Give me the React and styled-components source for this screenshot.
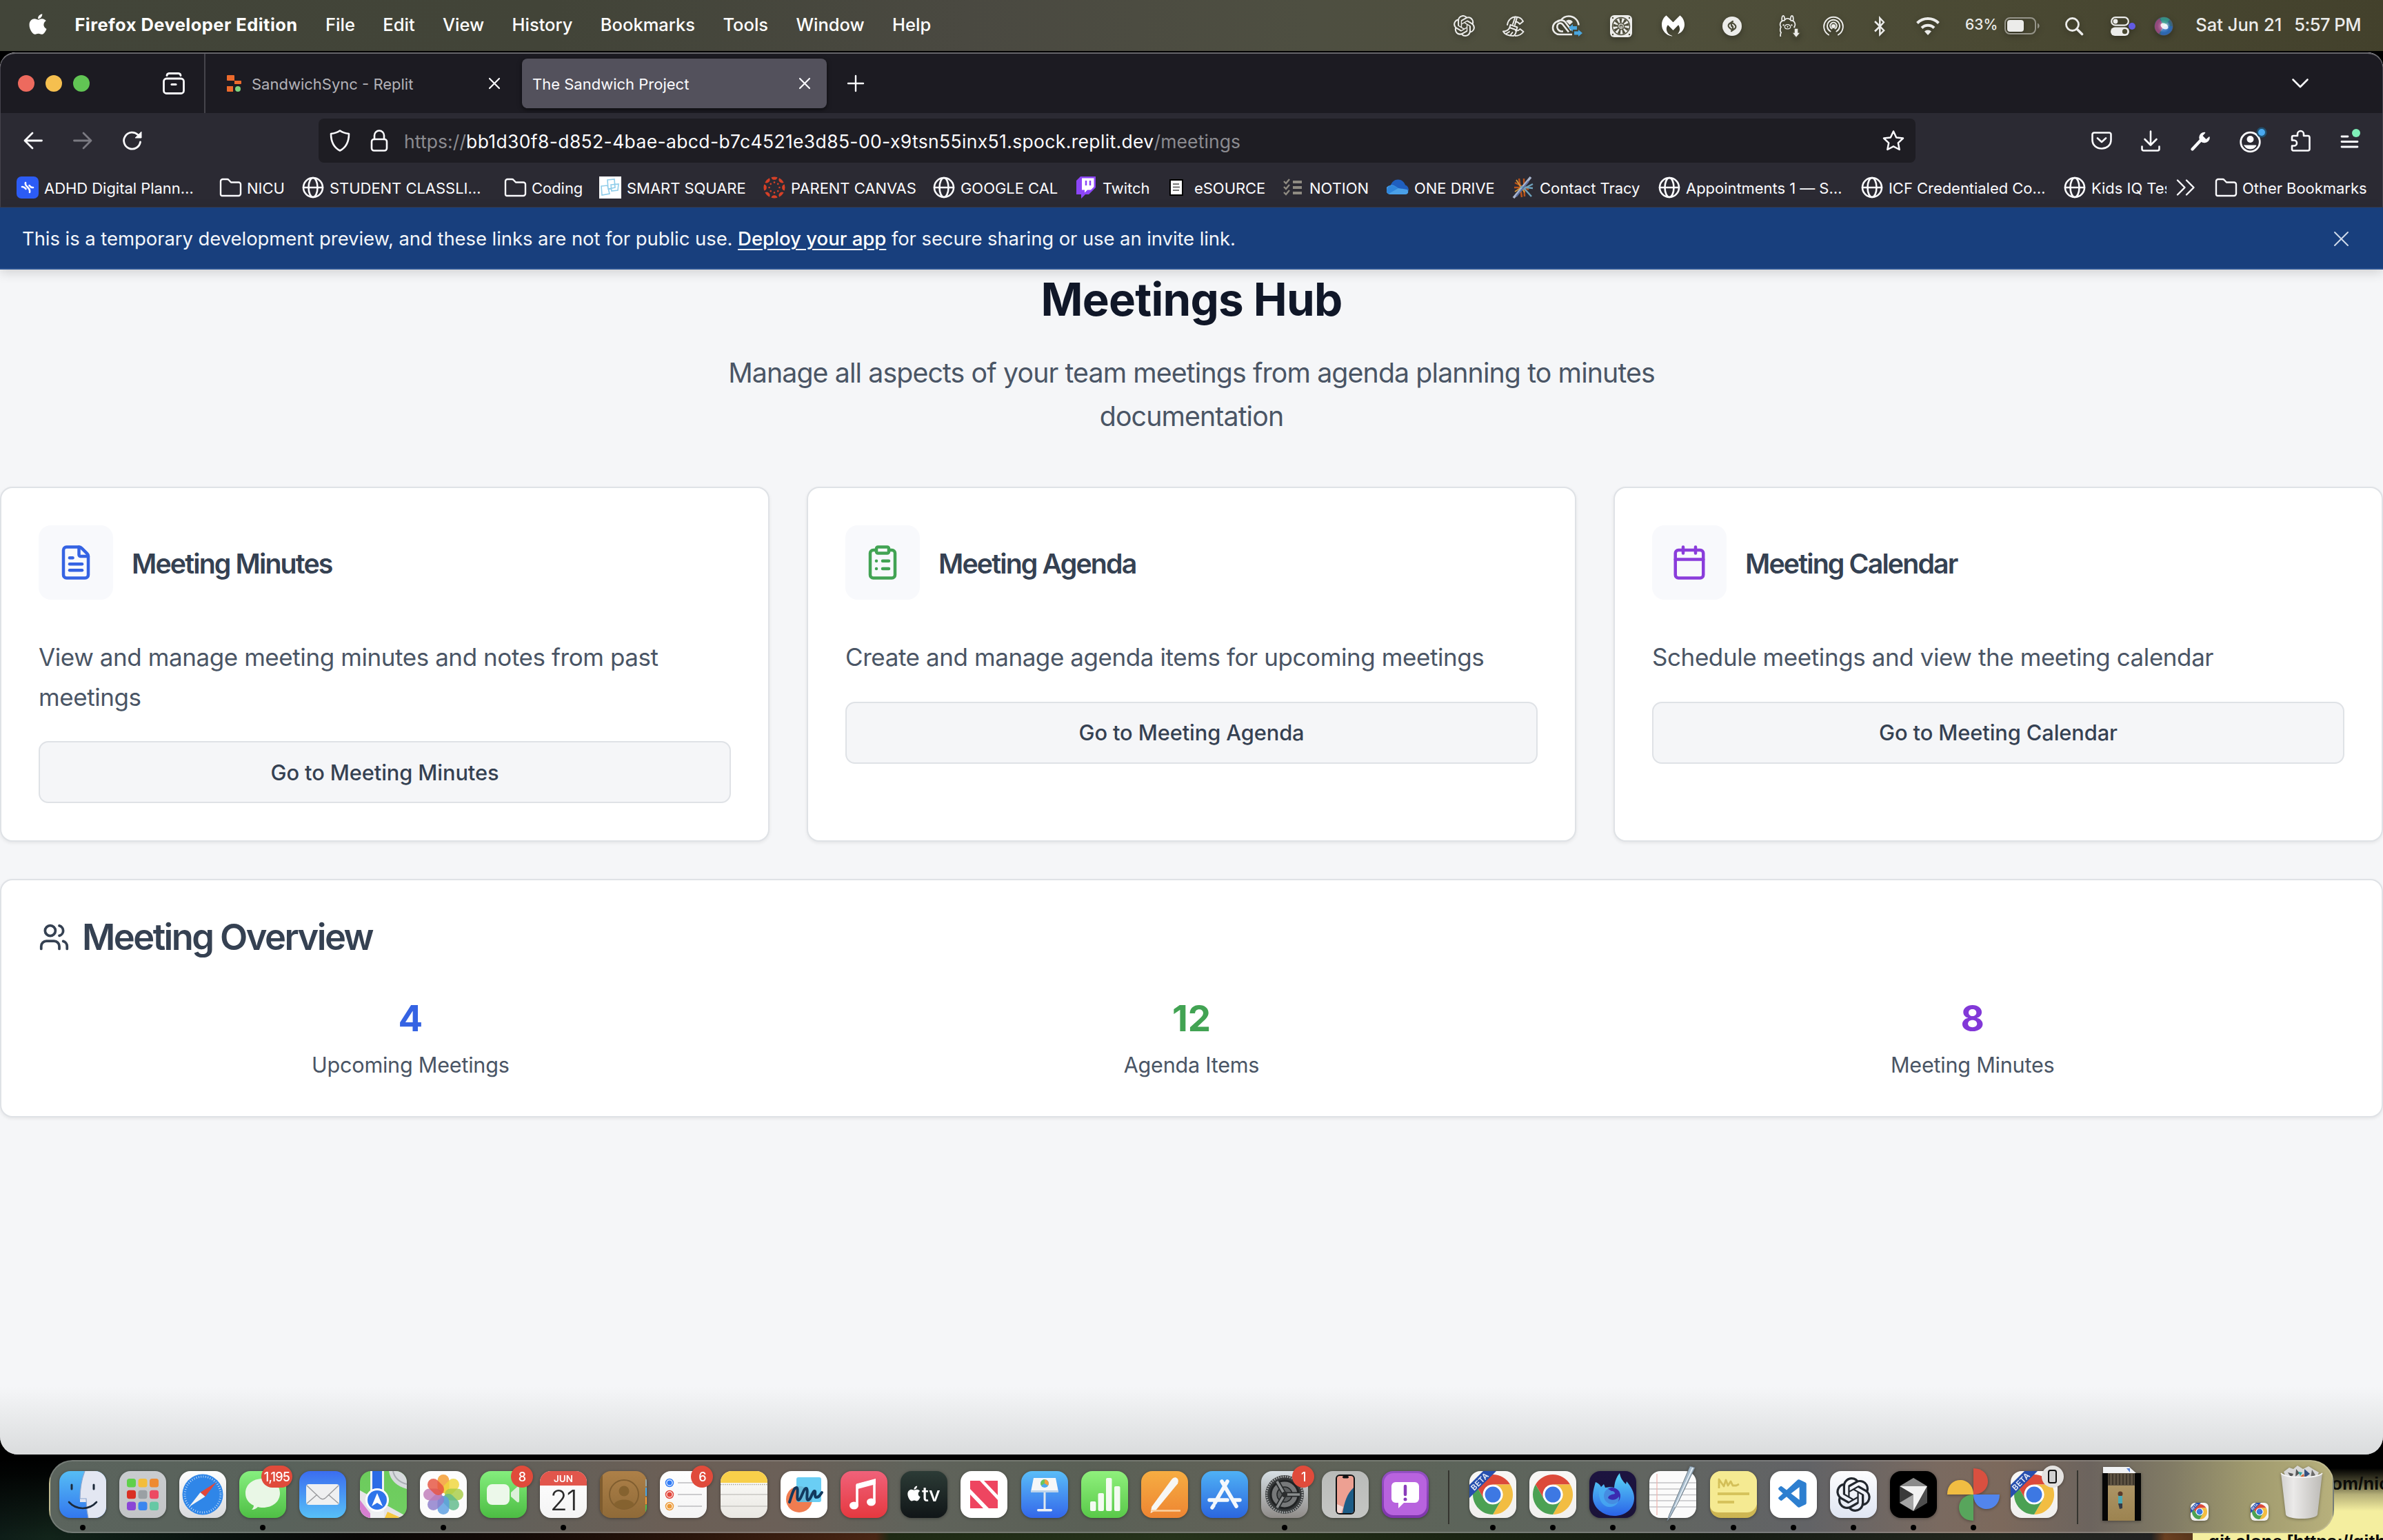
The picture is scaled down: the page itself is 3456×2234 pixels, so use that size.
import React from "react";
import styled, { createGlobalStyle, css } from "styled-components";
import { FileText, ClipboardList, Calendar, Users } from "lucide-react";
import { SiOpenai, SiOllama, SiMalwarebytes } from "react-icons/si";
import { FaApple, FaBluetoothB } from "react-icons/fa";
import { VscVscode } from "react-icons/vsc";

const Global = createGlobalStyle`
  *, *::before, *::after { box-sizing: border-box; }
  html, body { margin: 0; padding: 0; background: #000; }
  body { font-family: Inter, "Liberation Sans", sans-serif; -webkit-font-smoothing: antialiased; }
  svg { display: block; flex: none; overflow: visible; }
  h1, h2, h3, p { margin: 0; }
  button { font: inherit; border: 0; background: none; padding: 0; }
`;

const Text = styled.span`
  white-space: pre;
  letter-spacing: ${(p) => p.$ls || 0}px;
`;

/* ---------- desktop ---------- */

const Desktop = styled.div`
  position: relative;
  width: 3456px;
  height: 2234px;
  overflow: hidden;
  display: flex;
  flex-direction: column;
  background:
    linear-gradient(180deg, rgba(0, 0, 0, 1) 0 2118px, rgba(0, 0, 0, 0.85) 2140px, rgba(0, 0, 0, 0) 2230px),
    linear-gradient(90deg, #0e1d18 0, #12241a 70px, #0a1410 300px, #0a0807 520px, #150b07 760px, #2a150b 1000px,
      #4a2614 1270px, #1e2a14 1290px, #26331b 1700px, #1b2513 2100px, #161c14 2500px, #23271f 2900px, #222 3120px,
      #6b4020 3140px, #5a371c 3180px);
`;

const StickyNote = styled.div`
  position: absolute;
  left: 3180px;
  top: 2060px;
  width: 276px;
  height: 174px;
  overflow: hidden;
  padding: 77px 0 0 23px;
  display: flex;
  flex-direction: column;
  background: linear-gradient(180deg, #000 0 70px, #4a4830 90px, #b5af78 108px, #f4ee9f 132px);
  color: #0b0b08;
  font: 700 26px/30px "Liberation Sans", sans-serif;
`;

const NoteLine = styled.span`
  white-space: pre;
  padding-left: ${(p) => p.$indent || 0}px;
  margin-bottom: 54px;
`;

/* ---------- menu bar ---------- */

const MenuBar = styled.header`
  height: 74px;
  flex: none;
  display: flex;
  align-items: center;
  justify-content: space-between;
  padding: 0 32px 3px 41px;
  color: #fff;
  font-size: 25.5px;
  background: linear-gradient(90deg, #424539 0, #424438 800px, #4a4941 1400px, #4e4f41 1900px, #4f4f3b 2400px, #4a4933 2900px, #43412c 100%);
`;

const MenuGroup = styled.nav`
  display: flex;
  align-items: center;
  gap: 40.4px;
  height: 100%;
`;

const AppleMark = styled.span`
  width: 27px;
  display: flex;
  justify-content: center;
  padding-bottom: 2px;
`;

const MenuItem = styled(Text)`
  font-weight: ${(p) => (p.$bold ? 700 : 500)};
`;

const StatusGroup = styled.div`
  display: flex;
  align-items: center;
  height: 100%;
  color: #ececea;
`;

const StatusCell = styled.span`
  display: flex;
  justify-content: center;
  align-items: center;
  width: ${(p) => p.$w}px;
  margin-left: ${(p) => p.$ml || 0}px;
  padding-top: 4px;
  filter: drop-shadow(0 3px 4px rgba(0, 0, 0, 0.3));
`;

const StatusText = styled(Text)`
  font-size: ${(p) => p.$size || 25.5}px;
  font-weight: 500;
  margin-left: ${(p) => p.$ml || 0}px;
`;

/* ---------- browser window ---------- */

const Window = styled.main`
  position: relative;
  margin-top: 2px;
  height: 2034px;
  flex: none;
  display: flex;
  flex-direction: column;
  border-radius: 22px 22px 26px 26px;
  overflow: hidden;
  background: #f5f6f8;
`;

const chromeEdge = css`
  border-left: 1px solid #45434c;
  border-right: 1px solid #45434c;
`;

const TabStrip = styled.div`
  ${chromeEdge}
  height: 88px;
  flex: none;
  display: flex;
  align-items: center;
  background: #1c1b22;
  border-top: 2px solid #66656b;
  border-radius: 22px 22px 0 0;
  color: #fbfbfe;
  padding-left: 25px;
`;

const Lights = styled.div`
  display: flex;
  gap: 16px;
  width: 210px;
`;

const Light = styled.span`
  width: 24px;
  height: 24px;
  border-radius: 50%;
  background: ${(p) => p.$color};
`;

const ViewCell = styled.div`
  width: 62px;
  height: 100%;
  display: flex;
  align-items: center;
  border-right: 2px solid #45444b;
`;

const Tab = styled.div`
  width: ${(p) => p.$w}px;
  height: 72px;
  display: flex;
  align-items: center;
  font-size: 22px;
  border-radius: 8px;
  color: ${(p) => (p.$active ? "#fbfbfe" : "#b3b2b8")};
  background: ${(p) => (p.$active ? "#53515c" : "transparent")};
  box-shadow: ${(p) => (p.$active ? "0 2px 6px rgba(0,0,0,.6)" : "none")};
  padding: 0 ${(p) => p.$pr}px 0 ${(p) => p.$pl}px;
  gap: 13px;
`;

const TabTitle = styled(Text)`
  flex: 1;
  padding-top: 2px;
`;

const TabClose = styled.span`
  display: flex;
  color: #fbfbfe;
`;

const Spacer = styled.div`
  flex: 1;
`;

const Slot = styled.span`
  display: flex;
  align-items: center;
  width: ${(p) => p.$w}px;
  color: ${(p) => p.$color || "inherit"};
`;

const NavBar = styled.div`
  ${chromeEdge}
  height: 80px;
  flex: none;
  display: flex;
  align-items: center;
  padding: 0 0 0 33px;
  background: #2b2a33;
  color: #fbfbfe;
`;

const UrlBox = styled.div`
  width: 2316px;
  height: 64px;
  display: flex;
  align-items: center;
  padding: 0 16px 0 16px;
  border-radius: 8px;
  background: #1e1d23;
  font-size: 26.5px;
`;

const Url = styled.span`
  display: flex;
  flex: 1;
  padding-top: 1px;
`;

const UrlPart = styled(Text)`
  color: ${(p) => (p.$dim ? "#8b8b90" : "#fbfbfe")};
`;

const BookmarkBar = styled.div`
  ${chromeEdge}
  height: 57px;
  flex: none;
  display: flex;
  align-items: center;
  padding: 0 0 0 23px;
  background: #2b2a33;
  color: #fbfbfe;
  font-size: 22px;
  border-bottom: 1px solid #3a3943;
`;

const Bookmark = styled.div`
  width: ${(p) => p.$w}px;
  flex: none;
  display: flex;
  align-items: center;
  gap: 8px;
  overflow: hidden;
`;

const BookmarkLabel = styled(Text)`
  letter-spacing: -0.04px;
  padding-top: 1px;
`;

/* ---------- preview banner ---------- */

const Banner = styled.div`
  position: relative;
  z-index: 1;
  height: 90px;
  flex: none;
  display: flex;
  align-items: center;
  padding: 2px 50px 0 32px;
  background: #183f7d;
  border-bottom: 2px solid #2a5291;
  box-shadow: 0 4px 16px rgba(0, 0, 0, 0.16);
  color: #f3f6fa;
  font-size: 27.5px;
`;

const BannerLink = styled.a`
  color: #fff;
  font-weight: 500;
  text-decoration: underline;
  text-decoration-thickness: 2px;
  text-underline-offset: 5px;
`;

/* ---------- page ---------- */

const Page = styled.section`
  flex: 1;
  display: flex;
  flex-direction: column;
  gap: 54px;
  background: linear-gradient(180deg, rgba(215, 218, 220, 0) 1620px, rgba(215, 217, 218, 0.9) 1719px);
`;

const Hero = styled.div`
  height: 261px;
  padding-top: 3px;
  display: flex;
  flex-direction: column;
  align-items: center;
`;

const Title = styled.h1`
  font-size: 65.5px;
  line-height: 81px;
  font-weight: 700;
  color: #101728;
  letter-spacing: -0.78px;
`;

const Lead = styled.p`
  display: flex;
  flex-direction: column;
  align-items: center;
  margin-top: 34px;
  font-size: 39.3px;
  line-height: 63px;
  color: #4a5565;
`;

const Cards = styled.div`
  display: grid;
  grid-template-columns: repeat(3, 1fr);
  gap: 54px;
`;

const panel = css`
  background: #fff;
  border: 2px solid #dfe2e6;
  border-radius: 18px;
  padding: 54px;
  box-shadow: 0 2px 5px rgba(0, 0, 0, 0.07);
`;

const Card = styled.article`
  ${panel}
  height: 515px;
  display: flex;
  flex-direction: column;
`;

const CardHead = styled.div`
  display: flex;
  align-items: center;
  gap: 27px;
  margin-bottom: 55px;
`;

const IconTile = styled.span`
  width: 108px;
  height: 108px;
  display: flex;
  align-items: center;
  justify-content: center;
  border-radius: 18px;
  background: #f8f9fc;
  color: ${(p) => p.$color};
`;

const CardTitle = styled.h3`
  padding-top: 4px;
  font-size: 39.3px;
  font-weight: 600;
  line-height: 50px;
  color: #354152;
  letter-spacing: -1.85px;
`;

const CardText = styled.p`
  display: flex;
  flex-direction: column;
  align-items: flex-start;
  font-size: 35px;
  line-height: 57.6px;
  color: #4a5565;
  margin-bottom: 35px;
`;

const CardButton = styled.button`
  height: 90px;
  border: 2px solid #dfe2e6;
  border-radius: 14px;
  background: #f5f6f8;
  color: #354152;
  font-size: 30.8px;
  font-weight: 500;
`;

const Overview = styled.section`
  ${panel}
  height: 346px;
`;

const OverviewTitle = styled.h2`
  display: flex;
  align-items: center;
  gap: 18px;
  height: 54px;
  padding-top: 2px;
  font-size: 52.4px;
  font-weight: 600;
  color: #354152;
  margin-bottom: 54px;
`;

const Stats = styled.div`
  display: grid;
  grid-template-columns: repeat(3, 1fr);
  gap: 54px;
`;

const Stat = styled.div`
  display: flex;
  flex-direction: column;
  align-items: center;
`;

const StatValue = styled.strong`
  font-size: 52.8px;
  line-height: 77px;
  font-weight: 700;
  color: ${(p) => p.$color};
`;

const StatLabel = styled(Text)`
  margin-top: 6px;
  font-size: 30.6px;
  line-height: 45px;
  color: #4a5565;
`;

/* ---------- dock ---------- */

const Dock = styled.footer`
  position: relative;
  margin: 8px 0 0 71px;
  width: 3314px;
  height: 106px;
  flex: none;
  display: flex;
  padding-left: 3px;
  border-radius: 34px;
  border: 2px solid rgba(255, 255, 255, 0.16);
  background: linear-gradient(90deg, #5b645d 0, #59625b 340px, #61605a 640px, #6b5f56 900px, #6b6058 1060px, #60635b 1250px,
    #5a6056 1500px, #616258 1750px, #5c645a 2050px, #616560 2300px, #626366 2550px, #7a6a60 2740px, #7c695c 2830px,
    #6c645e 2960px, #827c65 3080px, #a09a6e 3190px, #b7b07c 100%);
`;

const DockCell = styled.div`
  width: 87.2px;
  flex: none;
  display: flex;
  flex-direction: column;
  align-items: ${(p) => (p.$end ? "flex-end" : "center")};
  padding: 14px ${(p) => (p.$end ? 5 : 0)}px 0 0;
`;

const IconHolder = styled.div`
  position: relative;
  width: ${(p) => p.$w || 68}px;
  height: ${(p) => p.$h || 68}px;
  display: flex;
  align-items: flex-end;
  justify-content: center;
  filter: drop-shadow(0 1px 2px rgba(0, 0, 0, 0.35));
`;

const RunDot = styled.span`
  width: 8px;
  height: 8px;
  border-radius: 50%;
  margin-top: 10px;
  background: #000;
`;

const Badge = styled.span`
  position: absolute;
  right: -9px;
  top: -8px;
  min-width: 32px;
  height: 32px;
  padding: 0 4px;
  border-radius: 16px;
  display: flex;
  align-items: center;
  justify-content: center;
  background: #e04b3b;
  color: #fff;
  font-size: 18px;
  font-weight: 500;
  letter-spacing: -0.8px;
`;

const PhoneBadge = styled(Badge)`
  background: #e4e2e0;
`;

const DockRule = styled.div`
  width: ${(p) => p.$w}px;
  flex: none;
  display: flex;
  justify-content: center;
  padding-top: 13px;
  &::before {
    content: "";
    width: 2px;
    height: 78px;
    background: #34342f;
  }
`;

/* ---------- line icons ---------- */

const Svg = ({ w = 32, h, vb, children, sw = 2.4 }) => (
  <svg width={w} height={h || w} viewBox={vb || `0 0 ${w} ${h || w}`} fill="none" stroke="currentColor" strokeWidth={sw} strokeLinecap="round" strokeLinejoin="round">
    {children}
  </svg>
);

const Cross = ({ s = 16, sw = 2.2 }) => <Svg w={s} sw={sw}><path d={`M1 1L${s - 1} ${s - 1}M${s - 1} 1L1 ${s - 1}`} /></Svg>;
const Folder = () => <Svg><path d="M2 26V7a3 3 0 0 1 3-3h6.5a3 3 0 0 1 2.200 1L17 8.500h11a3 3 0 0 1 3 3V25a3 3 0 0 1-3 3H4a2 2 0 0 1-2-2z" /></Svg>;
const GlobeIcon = () => <Svg sw={2.6}><circle cx="16" cy="16" r="14" /><ellipse cx="16" cy="16" rx="6.500" ry="14" /><path d="M2 16h28" /></Svg>;

const Ccleaner = () => (
  <Svg w={32} h={30} sw={2}>
    <path d="M7 13C8 6 13 1.500 19 1.500c5 0 9 2.500 11 6.500l-5 4c-2-3-4-3.500-6-3.500M19 21.500c3 .5 5-.5 6.500-2.500l5 4c-3 4-7 6-12 6" />
    <path d="M18.500 1.500L15 12M21 2.500L18 13" />
    <path d="M11.500 13l10 3.500-1.200 4-10-3.500zM10.500 17c-2 4-5 5.500-9.500 5.500 2 4 6 6.500 15 6.500 3-2 4-5 4-8.500M6 25.500l4-2.500M11.500 28l3-4" />
  </Svg>
);

const CreativeCloud = () => (
  <svg width="44" height="32" viewBox="0 0 44 32" fill="none" stroke="#ececea" strokeWidth="2.600">
    <path d="M29 28H11A9.500 9.500 0 0 1 10.500 8.500M13 7c3-4 7-5.500 11-5.500 8 0 14 6 14.500 13" />
    <path d="M24 24.500L15 13a4.500 4.500 0 0 0-7.500 2C6.500 19 9 23 13 23.500h3M28 22L19 10c-3-3.500-9.500-3.500-12 0" />
    <path d="M20 8.500c3.500-3 8-2 10 1.500L25.500 14z" fill="#ececea" stroke="none" />
    <path d="M24 18l6-5v3h6v5h-6v3zM44 26l-6-5v2.500h-6v5h6V31z" fill="#4aa6de" stroke="none" />
  </svg>
);

const Fan = () => (
  <svg width="32" height="32" viewBox="0 0 32 32">
    <rect width="32" height="32" rx="6" fill="#ececea" />
    <circle cx="16" cy="16" r="12.500" fill="none" stroke="#4d4d3b" strokeWidth="1.500" />
    {[...Array(9)].map((_, i) => (
      <path key={i} d="M14.800 11.500L13.200 4.500h4.200l-1 7z" fill="#4d4d3b" transform={`rotate(${i * 40} 16 16)`} />
    ))}
    <circle cx="16" cy="16" r="4.500" fill="#ececea" stroke="#4d4d3b" strokeWidth="1.500" />
    <path d="M14.500 18.500v-4h3v4" fill="none" stroke="#4d4d3b" strokeWidth="1.500" />
    {[[4, 4], [28, 4], [4, 28], [28, 28]].map(([x, y]) => <circle key={x + "-" + y} cx={x} cy={y} r="1.200" fill="#4d4d3b" />)}
  </svg>
);

const Shazam = () => (
  <svg width="28" height="28" viewBox="0 0 28 28">
    <circle cx="14" cy="14" r="14" fill="#ececea" />
    <path d="M15 7l-5 3.500a3.400 3.400 0 0 0-.5 5l2.500 2.500a2 2 0 0 0 3-2.500L13 13.500M13 21l5-3.500a3.400 3.400 0 0 0 .5-5L16 10a2 2 0 0 0-3 2.500L15 14.500" fill="none" stroke="#4d4d3b" strokeWidth="2.200" strokeLinecap="round" />
  </svg>
);

const Llama = () => (
  <svg width="30" height="32" viewBox="0 0 30 32">
    <SiOllama size={31} x={-3} y={0} />
    <path d="M22 19h6v6h3.500L25 33l-6.500-8H22z" fill="#ececea" stroke="#4c4c37" strokeWidth="1.500" />
  </svg>
);

const Airdrop = () => (
  <Svg w={30} sw={2}>
    <circle cx="15" cy="15" r="2" fill="currentColor" />
    <path d="M12.500 18.500a4.800 4.800 0 1 1 5 0M10.500 22.500a9 9 0 1 1 9 0M8 27.500a13.800 13.800 0 1 1 14 0" />
  </Svg>
);

const Wifi = () => (
  <svg width="34" height="26" viewBox="0 0 34 26" fill="none" stroke="#ececea">
    <path d="M1.500 8.500a22 22 0 0 1 31 0" strokeWidth="4" />
    <path d="M8 15.500a12.500 12.500 0 0 1 18 0" strokeWidth="4" />
    <path d="M17 26l-5-5.500a7 7 0 0 1 10 0z" fill="#ececea" stroke="none" />
  </svg>
);

const Battery = () => (
  <svg width="51" height="25" viewBox="0 0 51 25">
    <rect x="1" y="1" width="44" height="23" rx="7" fill="none" stroke="#96958a" strokeWidth="2" />
    <rect x="4" y="4" width="24" height="17" rx="4" fill="#ececea" />
    <path d="M48 8.500c3.500 1.500 3.500 6.500 0 8z" fill="#96958a" />
  </svg>
);

const ControlCenter = () => (
  <svg width="36" height="28" viewBox="0 0 36 28">
    <rect x="1.200" y="1.200" width="24.600" height="11.500" rx="5.750" fill="none" stroke="#ececea" strokeWidth="2.200" />
    <circle cx="7" cy="7" r="3.400" fill="#ececea" />
    <rect y="15.500" width="27" height="12.500" rx="6.200" fill="#ececea" />
    <circle cx="20.500" cy="21.700" r="3.600" fill="#4a4932" />
    <circle cx="31" cy="14" r="5" fill="#625be3" />
  </svg>
);

const Siri = () => (
  <svg width="28" height="28" viewBox="0 0 28 28">
    <defs>
      <radialGradient id="siri" cx=".5" cy=".5" r=".5">
        <stop offset="0" stopColor="#fff" /><stop offset=".25" stopColor="#b9d8e8" /><stop offset=".7" stopColor="#2b6c8c" /><stop offset="1" stopColor="#4c5b6a" />
      </radialGradient>
    </defs>
    <circle cx="14" cy="14" r="13.500" fill="url(#siri)" />
    <path d="M1 14a13 13 0 0 1 7-11l6 11-7 11a13 13 0 0 1-6-11z" fill="#c43a78" opacity=".65" />
    <path d="M9 2.500a13 13 0 0 1 14 2L14 14z" fill="#35a287" opacity=".7" />
    <path d="M27 14a13 13 0 0 1-18 12l5-12z" fill="#2a66c9" opacity=".6" />
    <ellipse cx="15" cy="14" rx="6" ry="4" fill="#fff" opacity=".85" transform="rotate(30 15 14)" />
  </svg>
);

/* ---------- bookmark icons ---------- */

const Planner = () => (
  <svg width="32" height="32" viewBox="0 0 32 32"><rect width="32" height="32" rx="7" fill="#2c5cf5" />
    <path d="M13 9c-1 3 1 4.500 3 6.500s4 4 3 7.500M8 15c3-.5 4 1.500 5.500 3M24 16c-3 .5-4-1-5.500-3" stroke="#fff" strokeWidth="2.600" fill="none" strokeLinecap="round" /></svg>
);
const SmartSquare = () => (
  <svg width="32" height="32" viewBox="0 0 32 32"><rect width="32" height="32" fill="#fff" />
    <path d="M12 5l10-1 1 12-10 2zM3 14l9-1 3 12-11 2zM17 12l11-1-1 9-9 1z" fill="none" stroke="#8fcdea" strokeWidth="1.600" /></svg>
);
const Canvas = () => (
  <svg width="32" height="32" viewBox="0 0 32 32">
    {[...Array(8)].map((_, i) => (
      <g key={i} transform={`rotate(${i * 45} 16 16)`}><path d="M11.500 1.200a15.500 15.500 0 0 1 9 0 4.600 4.600 0 0 1-9 0z" fill="#d64027" /><circle cx="16" cy="8.600" r="1.300" fill="#d64027" /></g>
    ))}
  </svg>
);
const Twitch = () => (
  <svg width="32" height="32" viewBox="0 0 32 32"><path d="M8 0L2 6v20h7v6l6-6h5l10-10V0z" fill="#8c45f7" />
    <path d="M10 2.500h17.500V15l-4.500 4.500h-5L14 23.500v-4h-4z" fill="#fff" /><path d="M16 6v7M22 6v7" stroke="#8c45f7" strokeWidth="2.500" /></svg>
);
const Source = () => (
  <svg width="32" height="32" viewBox="0 0 32 32"><rect x="4" y="4" width="20" height="24" fill="#000" /><rect x="6" y="6" width="16" height="20" fill="#fff" />
    <path d="M9 11h9M9 15.500h10M9 20h9" stroke="#777" strokeWidth="2" /></svg>
);
const Notion = () => (
  <svg width="32" height="32" viewBox="0 0 32 32" fill="none" stroke="#8f8b82"><path d="M16 8h13M16 16h13M16 24h13" strokeWidth="4" />
    <path d="M3 7l3 3 5-6M3 15l3 3 5-6M3 23l3 3 5-6" strokeWidth="2.400" /></svg>
);
const OneDrive = () => (
  <svg width="32" height="32" viewBox="0 0 32 32"><path d="M5 16C6 9 11 4 17 4.500c5 0 9 4 10 8 4 1 5 5 5 8L5 25z" fill="#1f5fc0" />
    <path d="M6 26a6.500 6.500 0 0 1-1-13c4-2 7 1 12 4l13 2c2 2 2 7-3 7z" fill="#4aa0e8" /><path d="M0 21c0-5 4-8 8-8 4 .5 6 2.500 9 4L3 25c-2-1-3-2-3-4z" fill="#2f86dc" /></svg>
);
const Contact = () => (
  <svg width="32" height="32" viewBox="0 0 32 32" fill="none">
    <path d="M4 9l20 10M10 3l4 27M17 3l1 26M3 16h18" stroke="#b8531c" strokeWidth="2.500" /><path d="M6 5l12 18M4 22l18-12" stroke="#d89a3a" strokeWidth="1.800" />
    <path d="M2 31L27 1" stroke="#a9b6cf" strokeWidth="3.500" /><path d="M12 20l18-9M12 15l18 2M18 18l10 11" stroke="#6fa3bd" strokeWidth="2.500" /><path d="M6 29L24 7" stroke="#5c6fa0" strokeWidth="2" />
  </svg>
);

/* ---------- dock icons ---------- */

const Grad = ({ id, a, b }) => (
  <linearGradient id={id} x1="0" y1="0" x2="0" y2="1"><stop offset="0" stopColor={a} /><stop offset="1" stopColor={b} /></linearGradient>
);

const Tile = ({ id, a = "#fff", b, children }) => (
  <svg width="68" height="68" viewBox="0 0 68 68">
    <defs><Grad id={`g-${id}`} a={a} b={b || a} /><clipPath id={`c-${id}`}><rect width="68" height="68" rx="16" /></clipPath></defs>
    <g clipPath={`url(#c-${id})`}><rect width="68" height="68" fill={`url(#g-${id})`} />{children}</g>
  </svg>
);

const Finder = () => (
  <Tile id="finder" a="#56bdf5" b="#3277ee">
    <path d="M37 0h31v68H42c-2-9-3-16-3-23h-9c0-18 2-32 7-45z" fill="#e3e7f2" />
    <path d="M37 0c-5 13-7 27-7 40h9c0 10 1 19 3 28" fill="none" stroke="#8ba6d0" strokeWidth="1.200" />
    <path d="M18 20v6M50 20v6" stroke="#1c2a3a" strokeWidth="3" strokeLinecap="round" />
    <path d="M14 45c11 12 29 12 40 0" fill="none" stroke="#1c2a3a" strokeWidth="2.600" strokeLinecap="round" />
  </Tile>
);
const Launchpad = () => (
  <Tile id="launch" a="#c9cccf" b="#c3c5c7">
    {["#5fd04a", "#f3bd3a", "#ee8a31", "#d92f23", "#9aa0a4", "#ec4a62", "#8a45d6", "#3b86ef", "#66c8a4"].map((c, i) => (
      <rect key={c} x={11 + (i % 3) * 16.5} y={11 + Math.floor(i / 3) * 16.8} width="13" height="12.500" rx="3.500" fill={c} />
    ))}
  </Tile>
);
const Safari = () => (
  <Tile id="safari" a="#fefefe" b="#d9dadd">
    <circle cx="34" cy="34" r="29.500" fill="#2f86e8" />
    <circle cx="34" cy="34" r="26" fill="none" stroke="#d6e7fa" strokeWidth="3" strokeDasharray="0.800 2.600" />
    <path d="M54 16L37.500 37 30.500 31z" fill="#e2473a" /><path d="M14 52L30.500 31l7 6z" fill="#f2f4f6" />
  </Tile>
);
const Messages = () => (
  <Tile id="msg" a="#86ef7f" b="#4fbf45">
    <path d="M34 11c15 0 25 9 25 21S49 53 34 53c-3 0-5-.3-7-1-2 2-5 4-9 4 2-2 3-4 3-6C13 46 9 40 9 32c0-12 10-21 25-21z" fill="#e9f7e6" />
  </Tile>
);
const Mail = () => (
  <Tile id="mail" a="#3b6df0" b="#57c0f7">
    <rect x="10" y="19" width="48" height="30" rx="4" fill="#eff0f1" />
    <path d="M11 21l19 18c3 2.500 5 2.500 8 0l19-18M11 47l15-13M57 47L42 34" fill="none" stroke="#9b9c9f" strokeWidth="1.500" />
  </Tile>
);
const Maps = () => (
  <Tile id="maps" a="#6ccb5c" b="#71cf62">
    <path d="M0 28L68 66v2H0z" fill="#e7e5e8" /><path d="M0 42l20 26H0z" fill="#d67fd0" /><path d="M42 0c2 14 12 22 26 26V0z" fill="#d7dadd" /><path d="M48 0c2 10 9 16 20 19" stroke="#a9adb3" strokeWidth="2" fill="none" />
    <path d="M15 0h20v68H15z" fill="#eef0f2" /><path d="M18 0h14v40H18z" fill="#2c6be6" /><path d="M36 68l4-9 20 9z" fill="#f5c63e" />
    <circle cx="25" cy="42" r="17" fill="#fff" /><circle cx="25" cy="42" r="14" fill="#2f74ea" /><path d="M25 32l8 19-8-5-8 5z" fill="#fff" />
  </Tile>
);
const Photos = () => (
  <Tile id="photos" a="#fdfdfd" b="#fbfbfb">
    {["#f49a2c", "#efd63a", "#a7cc46", "#5fb98a", "#5a9ee0", "#8c7ccb", "#c07bb8", "#e5533f"].map((c, i) => (
      <rect key={c} x="25.500" y="5" width="17" height="27" rx="8.500" fill={c} opacity=".82" transform={`rotate(${i * 45} 34 34)`} />
    ))}
  </Tile>
);
const FaceTime = () => (
  <Tile id="ft" a="#84ee7d" b="#4cbd43"><rect x="10" y="19" width="33" height="30" rx="8" fill="#ecf8ea" /><path d="M45 31l9-8c2-1 3 0 3 2v18c0 2-1 3-3 2l-9-8z" fill="#dcf0d9" /></Tile>
);
const CalendarTile = () => (
  <Tile id="cal" a="#fff" b="#f4f4f4">
    <rect width="68" height="21" fill="#e2564c" />
    <text x="34" y="16" textAnchor="middle" fontSize="13.500" fontWeight="600" fill="#fff">JUN</text>
    <text x="34" y="57" textAnchor="middle" fontSize="41" fontWeight="300" fill="#2b2b2b" letterSpacing="-1.500">21</text>
  </Tile>
);
const Contacts = () => (
  <Tile id="contacts" a="#ad8048" b="#8f6a38">
    <rect width="4" height="68" fill="#7f5c2e" /><path d="M66 12h2v10h-2z" fill="#9aa" /><path d="M66 24h2v12h-2z" fill="#47a7e8" /><path d="M66 38h2v10h-2z" fill="#f09a35" /><path d="M66 49h2v10h-2z" fill="#4dc04c" />
    <circle cx="35" cy="34" r="21" fill="none" stroke="#805e30" strokeWidth="2" /><circle cx="35" cy="29" r="7.500" fill="#85622f" /><path d="M20 49c3-10 27-10 30 0-8 8-22 8-30 0z" fill="#85622f" />
  </Tile>
);
const Reminders = () => (
  <Tile id="rem" a="#fefefe" b="#f4f4f4">
    {[["#2f7bf6", 17], ["#e2463b", 34], ["#ec9a38", 51]].map(([c, y]) => (
      <g key={c}><circle cx="14" cy={y} r="5.500" fill="#fff" stroke={c} strokeWidth="1.500" /><circle cx="14" cy={y} r="3.600" fill={c} /><path d={`M26 ${y}h35`} stroke="#bdbdbf" strokeWidth="1.500" /></g>
    ))}
  </Tile>
);
const Notes = () => (
  <Tile id="notes" a="#fdfdfb" b="#e9e7e2"><rect width="68" height="17" fill="#f8cf4a" /><path d="M0 19.500h68" stroke="#aaa79e" strokeWidth="1.500" strokeDasharray="1.500 1.500" /><path d="M0 34h68M0 51h68" stroke="#c9c8c3" strokeWidth="1.300" /></Tile>
);
const Freeform = () => (
  <Tile id="free" a="#fff">
    <circle cx="27" cy="41" r="19" fill="#f07c50" /><rect x="23" y="9" width="36" height="36" rx="3" fill="#50c5f2" opacity=".85" />
    <path d="M13 45c3-9 6-21 10-21s-1 18 3 18 7-17 11-17-1 17 3 17 6-12 9-13-1 9 3 9 4-2 8-7" fill="none" stroke="#12395e" strokeWidth="4" strokeLinecap="round" strokeLinejoin="round" />
  </Tile>
);
const Music = () => (
  <Tile id="music" a="#f0627a" b="#e5383f">
    <path d="M24 49V20.500l25-6.500v30" fill="none" stroke="#fff" strokeWidth="3.600" strokeLinejoin="round" /><path d="M23 18.500L51 11v8L23 26.500z" fill="#fff" />
    <ellipse cx="19.500" cy="50" rx="6.500" ry="5.500" fill="#fff" /><ellipse cx="44.500" cy="45" rx="6.500" ry="5.500" fill="#fff" />
  </Tile>
);
const AppleTv = () => (
  <Tile id="tv" a="#2c3b36" b="#101517">
    <FaApple size={25} x={7} y={20} color="#fff" />
    <text x="31" y="44" fontSize="29" fontWeight="500" fill="#fff" letterSpacing="-.5">tv</text>
  </Tile>
);
const News = () => (
  <Tile id="news" a="#fff"><path d="M14 14h14l26 28v12H41L14 26z" fill="#ee4560" /><path d="M34 14h20v21zM14 34v20h19z" fill="#ee4560" /></Tile>
);
const Keynote = () => (
  <Tile id="key" a="#5abdf8" b="#3367ea"><path d="M18 10h32l4 20H14z" fill="#f6f7f8" /><rect x="14" y="28" width="40" height="3" fill="#bcd3ea" /><rect x="32.500" y="31" width="3" height="25" fill="#dfe8ef" /><rect x="23" y="55" width="22" height="3.500" rx="1.700" fill="#eef2f5" />
    <circle cx="34" cy="18" r="6" fill="#4fa9ee" /><path d="M34 18v-6a6 6 0 0 1 5 9z" fill="#f2a33c" /><path d="M34 18v-6a6 6 0 0 0-5 9z" fill="#6cc65a" /></Tile>
);
const Numbers = () => (
  <Tile id="num" a="#8ff07c" b="#59c949">{[[13, 44], [24.5, 32], [36, 10], [48, 22]].map(([x, y]) => <rect key={x} x={x} y={y} width="8.500" height={58 - y} rx="2" fill="#f4fbf2" />)}</Tile>
);
const Pages = () => (
  <Tile id="pages" a="#f6ad42" b="#ee8532"><path d="M54 12c3 2 3 5 1 9L18 55l-8 3 3-9L46 15c3-3 5-4 8-3z" fill="#f7f7f5" transform="rotate(-8 34 34)" /><path d="M14 57.500h43" stroke="#fbd0a0" strokeWidth="2.500" /></Tile>
);
const AppStore = () => (
  <Tile id="store" a="#4fb1f5" b="#2b66df"><path d="M38 15L20 46M30 15l21 36M12 42h26M47 42h9M18 50l-2 3" stroke="#f4f8fc" strokeWidth="5.500" strokeLinecap="round" fill="none" /></Tile>
);
const Settings = () => (
  <Tile id="set" a="#d6dfe4" b="#8f8b88">
    <circle cx="34" cy="34" r="28" fill="#36393a" /><circle cx="34" cy="34" r="26" fill="none" stroke="#9fa2a3" strokeWidth="3" strokeDasharray="1.800 1.500" />
    <circle cx="34" cy="34" r="20" fill="#77797a" stroke="#202223" strokeWidth="3" /><circle cx="34" cy="34" r="11" fill="#5c5f60" stroke="#232526" strokeWidth="1.500" />
    <path d="M34 34h22M34 34L23 15M34 34L23 53" stroke="#26292a" strokeWidth="7" /><path d="M34 34h22M34 34L23 15M34 34L23 53" stroke="#8b8e8f" strokeWidth="3.500" /><circle cx="34" cy="34" r="4" fill="#2b2d2e" />
  </Tile>
);
const Mirroring = () => (
  <Tile id="mirror" a="#b9bbb9" b="#c5c6c4"><rect x="20" y="5" width="28" height="58" rx="6" fill="#101214" /><rect x="22" y="7" width="24" height="54" rx="4" fill="#eda092" /><path d="M46 24C36 34 33 44 30 61h12a4 4 0 0 0 4-4z" fill="#1d5c86" /><path d="M22 48l9 4-3 9h-2a4 4 0 0 1-4-4z" fill="#f4d9d4" /><rect x="30" y="7" width="9" height="3.500" rx="1.700" fill="#101214" /></Tile>
);
const Feedback = () => (
  <Tile id="fb" a="#9450c4" b="#7f35ac"><rect x="3" y="3" width="62" height="61" rx="14" fill="#b863de" /><path d="M20 16h28a6 6 0 0 1 6 6v18a6 6 0 0 1-6 6H32l-8 8v-8h-4a6 6 0 0 1-6-6V22a6 6 0 0 1 6-6z" fill="#fff" /><path d="M34 22v12" stroke="#8a3cba" strokeWidth="4.500" strokeLinecap="round" /><circle cx="34" cy="41" r="2.500" fill="#8a3cba" /></Tile>
);
const ChromeMark = () => (
  <>
    <circle cx="24" cy="24" r="12" fill="#fff" />
    <path d="M24 12h20.780a24 24 0 0 0-41.560 0L13.610 30A11.990 11.990 0 0 1 24 12z" fill="#dc4a3a" />
    <path d="M34.390 30L24 48a24 24 0 0 0 20.780-36H24A11.990 11.990 0 0 1 34.390 30z" fill="#f2bd42" />
    <path d="M13.610 30L3.220 12A24 24 0 0 0 24 48l10.390-18a11.990 11.990 0 0 1-20.780 0z" fill="#4ba153" />
    <circle cx="24" cy="24" r="9.500" fill="#3d78e3" />
  </>
);
const Chrome = ({ id, beta }) => (
  <Tile id={id} a="#f8f7f5" b="#f1f0ee">
    <g transform="translate(5 5) scale(1.210)"><ChromeMark /></g>
    {beta && <><path d="M0 20L20 0h19L0 39z" fill="#274fae" /><text x="0" y="0" fontSize="11.500" fontWeight="600" fill="#e8edf8" letterSpacing=".4" transform="translate(7 29) rotate(-45)">BETA</text></>}
  </Tile>
);
const SmallChrome = ({ id }) => (
  <svg width="26" height="26" viewBox="0 0 68 68"><Chrome id={id} beta /></svg>
);
const Firefox = () => (
  <Tile id="fox" a="#1d1440" b="#1a1238">
    <defs><Grad id="foxg" a="#59d6f7" b="#2a62e8" /></defs>
    <path d="M9 16c3 1 6 3 8 7l4-4 2 5c6-1 10-1 13 0 1-9 3-15 8-21 1 7 4 11 9 16l1-4c7 8 11 16 11 24 0 16-13 26-29 26S5 53 5 38c0-9 2-15 4-22z" fill="url(#foxg)" />
    <circle cx="33" cy="36" r="12" fill="#3b2bb0" /><path d="M14 24c8-1 13 1 18 5 4 0 5 2 5 4-5 1-9 2-10 6 4 4 11 4 16-2 1 10-7 16-15 15-9-1-16-11-14-28z" fill="#49aef2" opacity=".75" />
  </Tile>
);
const TextEdit = () => (
  <svg width="68" height="76" viewBox="0 -8 68 76"><rect width="68" height="68" rx="16" fill="#fbfbfb" /><path d="M0 17h68M0 26h68M0 34.500h68M0 43h68M0 52h68" stroke="#c3c3c6" strokeWidth="1.400" /><path d="M11 4v60" stroke="#eeb3ae" strokeWidth="1.200" />
    <path d="M59-7l7 2-24 50-12 22-4 5 3-9z" fill="#a7bccd" stroke="#6f7d88" strokeWidth="1" /><path d="M63-5L37 52" stroke="#e5eef5" strokeWidth="1.800" /></svg>
);
const Stickies = () => (
  <Tile id="stick" a="#d8c05a" b="#cdb552"><path d="M0 0h68v48c-2 8-8 12-14 12H12C5 60 0 56 0 50z" fill="#f5ea92" /><path d="M13 25V12l7 10 3-9 3 8 4-6 3 6h5l4-2" fill="none" stroke="#d3bf58" strokeWidth="2.800" strokeLinejoin="round" /><path d="M11 33h46M11 45h24" stroke="#d6c35c" strokeWidth="4" /></Tile>
);
const Code = () => (
  <Tile id="code" a="#fff"><VscVscode size={50} x={9} y={9} color="#2d7fd0" /></Tile>
);
const ChatGpt = () => (
  <Tile id="gpt" a="#fdfdfe" b="#dfe5f2"><SiOpenai size={50} x={9} y={9} color="#22272e" /></Tile>
);
const Cursor = () => (
  <Tile id="cursor" a="#000"><path d="M34 10L54 22v24L34 58 14 46V22z" fill="#555" /><path d="M34 10L54 22H14z" fill="#8b8b8b" /><path d="M14 22h40L34 58V34z" fill="#f2f2f2" /><path d="M14 22v24l20-12z" fill="#3a3a3a" /><path d="M14 46l20 12V34z" fill="#a5a5a5" /><path d="M54 22v24L34 58z" fill="#4e4e4e" /></Tile>
);
const Pinwheel = () => (
  <svg width="78" height="68" viewBox="0 5 78 68"><path d="M39 39V1c14 0 21 9 21 19s-8 19-21 19z" fill="#d95040" /><path d="M39 39h38c0 14-9 21-19 21S39 52 39 39z" fill="#5285ec" /><path d="M39 39v38c-14 0-21-9-21-19s8-19 21-19z" fill="#58a55c" /><path d="M39 39H1c0-14 9-21 19-21s19 8 19 21z" fill="#f1bd42" /></svg>
);
const Thumb = () => (
  <svg width="56" height="78" viewBox="0 0 56 78"><defs><Grad id="lawn" a="#b29a6c" b="#9c8350" /></defs>
    <path d="M1 0h38l10 9v3H1z" fill="#f1f2f4" /><path d="M35 2h5v6z" fill="#5b84d8" /><rect y="9" width="56" height="69" fill="#060606" /><rect x="8" y="9" width="39" height="69" fill="url(#lawn)" /><rect x="8" y="9" width="39" height="18" fill="#5d5242" />
    <path d="M10 10v16M15 10v16M20 10v16M25 10v16M30 10v16M35 10v16M40 10v16M45 10v16" stroke="#3e362b" strokeWidth="2" /><circle cx="26" cy="39" r="3.500" fill="#5b3b2c" /><path d="M23 42h6v12h-6z" fill="#4ba9b5" /><path d="M23 53h6v7l-4 1z" fill="#333a46" /></svg>
);
const Trash = () => (
  <svg width="60" height="78" viewBox="0 0 60 78"><defs><linearGradient id="bin"><stop offset="0" stopColor="#d2d1cf" /><stop offset=".3" stopColor="#ebeae9" /><stop offset="1" stopColor="#bdbbb7" /></linearGradient></defs>
    <path d="M4 9l8-6 6 2 6-5 8 5 8-4 8 5 7 4-4 9H8z" fill="#d8d8d8" /><path d="M10 10l8 2-3 6zM22 5l5 6-6 5z" fill="#565656" /><path d="M34 5l8 7-8 6z" fill="#35507e" /><path d="M25 9l6 1-3 5z" fill="#31a79f" /><path d="M28 16l5-4 1 6z" fill="#d4622f" /><path d="M45 6l5 8-7 4z" fill="#6b6a68" />
    <path d="M0 11c6 8 54 8 60 0l-7 60c-2 8-44 8-46 0z" fill="url(#bin)" /><path d="M0 11c6 8 54 8 60 0" fill="none" stroke="#f6f6f6" strokeWidth="1.500" /></svg>
);

/* ---------- data ---------- */

const menus = ["File", "Edit", "View", "History", "Bookmarks", "Tools", "Window", "Help"];

const bookmarks = [
  [Planner, "ADHD Digital Plann…", 294],
  [Folder, "NICU", 120],
  [GlobeIcon, "STUDENT CLASSLI…", 293],
  [Folder, "Coding", 138],
  [SmartSquare, "SMART SQUARE", 238],
  [Canvas, "PARENT CANVAS", 246],
  [GlobeIcon, "GOOGLE CAL", 206],
  [Twitch, "Twitch", 133],
  [Source, "eSOURCE", 167],
  [Notion, "NOTION", 152],
  [OneDrive, "ONE DRIVE", 182],
  [Contact, "Contact Tracy", 212],
  [GlobeIcon, "Appointments 1 — S…", 294],
  [GlobeIcon, "ICF Credentialed Co…", 294],
  [GlobeIcon, "Kids IQ Test", 149],
];

const cards = [
  { icon: FileText, color: "#3563e3", title: "Meeting Minutes", lines: ["View and manage meeting minutes and notes from past", "meetings"], button: "Go to Meeting Minutes" },
  { icon: ClipboardList, color: "#42a353", title: "Meeting Agenda", lines: ["Create and manage agenda items for upcoming meetings"], button: "Go to Meeting Agenda" },
  { icon: Calendar, color: "#8a3ddb", title: "Meeting Calendar", lines: ["Schedule meetings and view the meeting calendar"], button: "Go to Meeting Calendar" },
];

const stats = [
  ["4", "Upcoming Meetings", "#3563e3"],
  ["12", "Agenda Items", "#42a353"],
  ["8", "Meeting Minutes", "#8238d8"],
];

const dockApps = [
  { icon: Finder, run: true }, { icon: Launchpad }, { icon: Safari }, { icon: Messages, run: true, badge: "1,195" }, { icon: Mail }, { icon: Maps },
  { icon: Photos, run: true }, { icon: FaceTime, badge: "8" }, { icon: CalendarTile, run: true }, { icon: Contacts }, { icon: Reminders, badge: "6" },
  { icon: Notes }, { icon: Freeform }, { icon: Music }, { icon: AppleTv }, { icon: News }, { icon: Keynote }, { icon: Numbers }, { icon: Pages },
  { icon: AppStore }, { icon: Settings, run: true, badge: "1" }, { icon: Mirroring }, { icon: Feedback },
];

const openApps = [
  { icon: () => <Chrome id="cb" beta />, run: true }, { icon: () => <Chrome id="ch" />, run: true }, { icon: Firefox, run: true }, { icon: TextEdit, run: true },
  { icon: Stickies, run: true }, { icon: Code, run: true }, { icon: ChatGpt, run: true }, { icon: Cursor, run: true }, { icon: Pinwheel, run: true, w: 78 },
  { icon: () => <Chrome id="cp" beta />, phone: true },
];

const DockApp = ({ app: { icon: Icon, run, badge, phone, w } }) => (
  <DockCell>
    <IconHolder $w={w}>
      <Icon />
      {badge && <Badge>{badge}</Badge>}
      {phone && <PhoneBadge><svg width="13" height="20" viewBox="0 0 13 20"><rect x="1" y="1" width="11" height="18" rx="2.500" fill="#d0d0d0" stroke="#111" strokeWidth="2" /></svg></PhoneBadge>}
    </IconHolder>
    {run && <RunDot />}
  </DockCell>
);

export default function App() {
  return (
    <Desktop>
      <Global />
      <StickyNote>
        <NoteLine $indent={178}>om/nicu</NoteLine>
        <NoteLine>git clone [https://githu</NoteLine>
      </StickyNote>

      <MenuBar>
        <MenuGroup>
          <AppleMark><FaApple size={34} color="#fff" /></AppleMark>
          <MenuItem $bold $ls={0.45}>Firefox Developer Edition</MenuItem>
          {menus.map((m) => <MenuItem key={m}>{m}</MenuItem>)}
        </MenuGroup>
        <StatusGroup>
          <StatusCell $w={32}><SiOpenai size={31} /></StatusCell>
          <StatusCell $w={32} $ml={40}><Ccleaner /></StatusCell>
          <StatusCell $w={44} $ml={40}><CreativeCloud /></StatusCell>
          <StatusCell $w={32} $ml={40}><Fan /></StatusCell>
          <StatusCell $w={32} $ml={43}><SiMalwarebytes size={33} color="#fff" /></StatusCell>
          <StatusCell $w={28} $ml={56}><Shazam /></StatusCell>
          <StatusCell $w={30} $ml={54}><Llama /></StatusCell>
          <StatusCell $w={30} $ml={34}><Airdrop /></StatusCell>
          <StatusCell $w={20} $ml={42}><FaBluetoothB size={30} /></StatusCell>
          <StatusCell $w={34} $ml={43}><Wifi /></StatusCell>
          <StatusText $size={21} $ml={37}>63%</StatusText>
          <StatusCell $w={51} $ml={10}><Battery /></StatusCell>
          <StatusCell $w={26} $ml={37}><Svg w={26} sw={2.8}><circle cx="10.500" cy="10.500" r="9" /><path d="M17 17l7.500 7.500" strokeWidth="3.600" /></Svg></StatusCell>
          <StatusCell $w={36} $ml={40}><ControlCenter /></StatusCell>
          <StatusCell $w={28} $ml={27}><Siri /></StatusCell>
          <StatusText $ml={32}>Sat Jun 21</StatusText>
          <StatusText $ml={18} $ls={-0.5}>5:57 PM</StatusText>
        </StatusGroup>
      </MenuBar>

      <Window>
        <TabStrip>
          <Lights>
            <Light $color="#ed6a5e" /><Light $color="#f5bf4f" /><Light $color="#61c554" />
          </Lights>
          <ViewCell>
            <Svg w={32} sw={2.8}><rect x="1.500" y="9" width="29" height="21.500" rx="4" /><path d="M6 4.500a3.500 3.500 0 0 1 3-3h14a3.500 3.500 0 0 1 3 3" /><path d="M13 17.500h6" strokeWidth="3.200" /></Svg>
          </ViewCell>
          <Tab $w={459} $pl={30} $pr={32}>
            <svg width="24" height="24" viewBox="0 0 24 24"><path d="M2 0h9a1 1 0 0 1 1 1v7H2a1 1 0 0 1-1-1V1a1 1 0 0 1 1-1zM12 8h9a1 1 0 0 1 1 1v3a1 1 0 0 1-1 1h-9zM1 16h9v8H2a1 1 0 0 1-1-1z" fill="#ec6a2c" /><circle cx="17" cy="20" r="4" fill="#7ed37e" /></svg>
            <TabTitle>SandwichSync - Replit</TabTitle>
            <TabClose><Cross /></TabClose>
          </Tab>
          <Tab $active $w={442} $pl={15} $pr={24}>
            <TabTitle>The Sandwich Project</TabTitle>
            <TabClose><Cross /></TabClose>
          </Tab>
          <Slot $w={1000}><Slot $w={30} /><Svg w={24} sw={2.4}><path d="M12 1v22M1 12h22" /></Svg></Slot>
          <Spacer />
          <Slot $w={131}><Svg w={24} h={14} sw={2.6}><path d="M1.500 1.500L12 12 22.500 1.500" /></Svg></Slot>
        </TabStrip>

        <NavBar>
          <Slot $w={72}><Svg w={28} h={26} sw={2.8}><path d="M26.500 13H2M13 2L2 13l11 11" /></Svg></Slot>
          <Slot $w={72} $color="#7b7a82"><Svg w={28} h={26} sw={2.8}><path d="M1.500 13H26M15 2l11 11-11 11" /></Svg></Slot>
          <Slot $w={284}><Svg w={28} sw={2.8}><path d="M25.500 16A12 12 0 1 1 22 5.500L25 8" /><path d="M27 1.500V10h-8.500z" fill="currentColor" strokeWidth="1" /></Svg></Slot>
          <UrlBox>
            <Slot $w={59}><Svg w={30} h={32} sw={2.6}><path d="M15 1.500c4 3 8.500 4 13 4.500 0 12-4 20-13 24.500C6 26 2 18 2 6c4.500-.5 9-1.500 13-4.500z" /></Svg></Slot>
            <Slot $w={49}><Svg w={26} h={32} sw={2.6}><rect x="2" y="14" width="22" height="16.500" rx="3.500" /><path d="M6 14V8.500a7 7 0 0 1 14 0V14" /></Svg></Slot>
            <Url>
              <UrlPart $dim $ls={0.1}>https://</UrlPart>
              <UrlPart $ls={0.35}>bb1d30f8-d852-4bae-abcd-b7c4521e3d85-00-x9tsn55inx51.spock.replit.dev</UrlPart>
              <UrlPart $dim $ls={0.1}>/meetings</UrlPart>
            </Url>
            <Svg w={32} h={30} sw={2.5}><path d="M16 1.500l4.200 9 9.800 1.100-7.200 6.700 1.900 9.700L16 23.300 7.300 28l1.900-9.700L2 11.600l9.800-1.100z" /></Svg>
          </UrlBox>
          <Spacer />
          <Slot $w={72}><Svg w={30} h={26} sw={2.6}><path d="M4 1.500h22a2.500 2.500 0 0 1 2.500 2.500v8C28.500 20 22 24.500 15 24.500S1.500 20 1.500 12V4A2.500 2.500 0 0 1 4 1.500z" /><path d="M9 9.500l6 5.500 6-5.500" /></Svg></Slot>
          <Slot $w={72}><Svg w={28} h={31} sw={2.6}><path d="M14 1.500V21M5.500 13l8.500 8.500 8.500-8.500M1.500 23.500V27a2.500 2.500 0 0 0 2.500 2.500h20a2.500 2.500 0 0 0 2.500-2.500v-3.500" /></Svg></Slot>
          <Slot $w={71}><Svg w={30} sw={4.4}><path d="M2.500 27.500L17 12" /><path d="M20.500 3.500a7 7 0 1 0 6.500 6.500l-4.500 4-6-6z" fill="currentColor" strokeWidth="1.600" /></Svg></Slot>
          <Slot $w={74}><Svg w={40} h={36} sw={2.8} vb="0 -4 40 36"><circle cx="15.500" cy="16" r="13.800" /><circle cx="15.500" cy="12" r="5" fill="currentColor" strokeWidth="0" /><path d="M7 21h17c-1 3-4.500 5-8.500 5S8 24 7 21z" fill="currentColor" strokeWidth="1" /><circle cx="32" cy="2" r="7.500" fill="#22516f" stroke="none" /><circle cx="32" cy="2" r="5" fill="#4aa9f0" stroke="none" /></Svg></Slot>
          <Slot $w={73}><Svg w={29} h={32} sw={2.6}><path d="M2 11a2 2 0 0 1 2-2h6V6.500a4.500 4.500 0 0 1 9 0V9h6a2.500 2.500 0 0 1 2.500 2.500V28a2.500 2.500 0 0 1-2.500 2.500H4A2 2 0 0 1 2 28v-4.500h3a4 4 0 0 0 0-8H2z" /></Svg></Slot>
          <Slot $w={60}><Svg w={32} h={36} sw={2.8} vb="0 -4 32 36"><path d="M1 8h9M1 15.500h23M1 23h23" /><circle cx="22" cy="3" r="6" fill="#7ff0b8" stroke="none" /></Svg></Slot>
        </NavBar>

        <BookmarkBar>
          {bookmarks.map(([Icon, label, w]) => (
            <Bookmark key={label} $w={w}><Icon /><BookmarkLabel>{label}</BookmarkLabel></Bookmark>
          ))}
          <Slot $w={70}><Slot $w={14} /><Svg w={28} h={24} sw={2.4}><path d="M2 1.500L12.500 12 2 22.500M15 1.500L25.500 12 15 22.500" /></Svg></Slot>
          <Bookmark $w={240}><Folder /><BookmarkLabel>Other Bookmarks</BookmarkLabel></Bookmark>
        </BookmarkBar>

        <Banner>
          <Text $ls={-0.07}>This is a temporary development preview, and these links are not for public use. </Text>
          <BannerLink>Deploy your app</BannerLink>
          <Text $ls={-0.1}> for secure sharing or use an invite link.</Text>
          <Spacer />
          <Slot $w={21} $color="#cfdaea"><Cross s={21} sw={2} /></Slot>
        </Banner>

        <Page>
          <Hero>
            <Title>Meetings Hub</Title>
            <Lead>
              <Text $ls={-0.9}>Manage all aspects of your team meetings from agenda planning to minutes</Text>
              <Text $ls={-0.9}>documentation</Text>
            </Lead>
          </Hero>
          <Cards>
            {cards.map((c) => (
              <Card key={c.title}>
                <CardHead>
                  <IconTile $color={c.color}><c.icon size={54} strokeWidth={2} /></IconTile>
                  <CardTitle>{c.title}</CardTitle>
                </CardHead>
                <CardText>{c.lines.map((l) => <Text key={l} $ls={-0.42}>{l}</Text>)}</CardText>
                <CardButton><Text $ls={-0.1}>{c.button}</Text></CardButton>
              </Card>
            ))}
          </Cards>
          <Overview>
            <OverviewTitle><Users size={45} strokeWidth={2} /><Text $ls={-2.55}>Meeting Overview</Text></OverviewTitle>
            <Stats>
              {stats.map(([v, l, c]) => (
                <Stat key={l}><StatValue $color={c}>{v}</StatValue><StatLabel $ls={-0.24}>{l}</StatLabel></Stat>
              ))}
            </Stats>
          </Overview>
        </Page>
      </Window>

      <Dock>
        {dockApps.map((a, i) => <DockApp key={i} app={a} />)}
        <DockRule $w={40} />
        {openApps.map((a, i) => <DockApp key={i} app={a} />)}
        <DockRule $w={40} />
        <DockCell><IconHolder $w={56} $h={72}><Thumb /></IconHolder></DockCell>
        <DockCell $end><IconHolder $w={26} $h={72}><SmallChrome id="s1" /></IconHolder></DockCell>
        <DockCell $end><IconHolder $w={26} $h={72}><SmallChrome id="s2" /></IconHolder></DockCell>
        <DockCell><IconHolder $w={60} $h={70}><Trash /></IconHolder></DockCell>
      </Dock>
    </Desktop>
  );
}
